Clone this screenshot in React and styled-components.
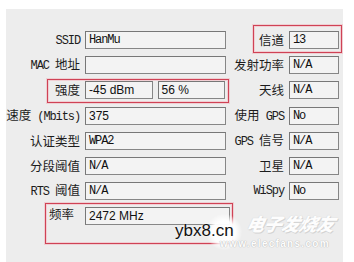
import styled, { createGlobalStyle, css } from "styled-components";

const GlobalStyle = createGlobalStyle`
  html, body {
    margin: 0;
    background: #ffffff;
  }
  body {
    width: 354px;
    height: 262px;
    overflow: hidden;
  }
`;

const Panel = styled.div`
  position: relative;
  margin: 9px 0 0 6px;
  width: 337px;
  height: 253px;
  padding-top: 22px;
  box-sizing: border-box;
  display: flex;
  background: #ededed;
  font-family: "Noto Sans CJK SC", sans-serif;
  color: #1c1c1c;
`;

const Column = styled.div`
  display: flex;
  flex-direction: column;
  gap: 7.2px;
  width: ${(p) => p.$w}px;
`;

const Row = styled.div`
  position: relative;
  display: flex;
  align-items: center;
  height: 18px;

  ${(p) =>
    p.$mark &&
    css`
      &::after {
        content: "";
        position: absolute;
        left: ${p.$mark[0]}px;
        right: ${p.$mark[1]}px;
        top: ${p.$mark[2]}px;
        bottom: ${p.$mark[3]}px;
        border: 1px solid #cf4255;
        box-shadow: 0 0 0 1px rgba(240, 170, 180, 0.45),
          inset 0 0 0 1px rgba(244, 180, 190, 0.55);
        pointer-events: none;
      }
    `}
`;

const Label = styled.div`
  flex-shrink: 0;
  width: ${(p) => p.$w}px;
  box-sizing: border-box;
  padding-right: 5px;
  text-align: right;
  font-size: 12.5px;
  line-height: 18px;
  white-space: pre;

  ${(p) =>
    p.$start &&
    css`
      align-self: flex-start;
      text-align: left;
      padding: 0 0 0 43px;
      line-height: 13px;
    `}

  ${(p) =>
    p.$up &&
    css`
      align-self: flex-start;
      line-height: 14px;
    `}
`;

const Lat = styled.span`
  font-family: "Liberation Mono", monospace;
  font-size: 12px;
  letter-spacing: -1.1px;
`;

const Pair = styled.div`
  display: flex;
  gap: 5px;
  width: 140px;
`;

const Field = styled.div`
  box-sizing: border-box;
  height: 18px;
  width: ${(p) => (p.$w ? `${p.$w}px` : "auto")};
  flex: ${(p) => (p.$w ? "0 0 auto" : "1")};
  padding: 0 3px;
  border: 1px solid #868686;
  border-top-color: #777;
  border-left-color: #777;
  background: #f3f3f3;
  font-family: ${(p) =>
    p.$sans ? '"Liberation Sans", sans-serif' : '"Liberation Mono", monospace'};
  font-size: 12px;
  letter-spacing: ${(p) => (p.$sans ? "0" : "-1.1px")};
  line-height: 16px;
  color: #111;
  white-space: nowrap;
  overflow: hidden;
`;

const Glow = styled.div`
  position: absolute;
  left: 200px;
  top: 205px;
  width: 36px;
  height: 36px;
  border-radius: 50%;
  background: radial-gradient(circle, rgba(255, 255, 255, 0.97) 45%, rgba(255, 255, 255, 0) 72%);
`;

const SiteMark = styled.div`
  position: absolute;
  left: 169px;
  top: 213px;
  font-family: "Liberation Sans", sans-serif;
  font-size: 17px;
  line-height: 17px;
  color: #111;
  text-shadow: 0 0 2px #fff;
`;

const LogoCn = styled.div`
  position: absolute;
  left: 241px;
  top: 203px;
  font-family: "Noto Sans CJK SC", sans-serif;
  font-size: 18px;
  font-weight: 900;
  font-style: italic;
  line-height: 22px;
  letter-spacing: -0.5px;
  color: #fdfdfd;
  text-shadow: 0 0 1px #c8c8c8, 1px 1px 0 #d4d4d4;
  transform: skewX(-12deg);
`;

const LogoUrl = styled.div`
  position: absolute;
  left: 214px;
  top: 230px;
  font-family: "Liberation Sans", sans-serif;
  font-size: 10px;
  font-weight: bold;
  line-height: 10px;
  letter-spacing: 1.3px;
  color: #fdfdfd;
  text-shadow: 0 0 1px #b8b8b8, 0 0 1px #b8b8b8;
`;

const App = () => {
  return (
    <>
      <GlobalStyle />
      <Panel>
        <Column $w={220}>
          <Row>
            <Label $w={79}>
              <Lat>SSID</Lat>
            </Label>
            <Field $w={141}>HanMu</Field>
          </Row>
          <Row>
            <Label $w={79}>
              <Lat>{"MAC "}</Lat>地址
            </Label>
            <Field $w={141} />
          </Row>
          <Row $mark={[41, -3, -2, -4]}>
            <Label $w={79}>强度</Label>
            <Pair>
              <Field $sans>-45 dBm</Field>
              <Field $sans>56 %</Field>
            </Pair>
          </Row>
          <Row>
            <Label $w={79}>
              速度<Lat>{" (Mbits)"}</Lat>
            </Label>
            <Field $w={141} $sans>
              375
            </Field>
          </Row>
          <Row>
            <Label $w={79}>认证类型</Label>
            <Field $w={141}>WPA2</Field>
          </Row>
          <Row>
            <Label $w={79}>分段阈值</Label>
            <Field $w={141}>N/A</Field>
          </Row>
          <Row>
            <Label $w={79}>
              <Lat>{"RTS "}</Lat>阈值
            </Label>
            <Field $w={141}>N/A</Field>
          </Row>
          <Row $mark={[39, -7, -4, -19]}>
            <Label $w={79} $start>
              频率
            </Label>
            <Field $w={145} $sans>
              2472 MHz
            </Field>
          </Row>
        </Column>
        <Column $w={113}>
          <Row $mark={[27, -3, -6, -4]}>
            <Label $w={63}>信道</Label>
            <Field $w={50}>13</Field>
          </Row>
          <Row>
            <Label $w={63}>发射功率</Label>
            <Field $w={50}>N/A</Field>
          </Row>
          <Row>
            <Label $w={63}>天线</Label>
            <Field $w={50}>N/A</Field>
          </Row>
          <Row>
            <Label $w={63}>
              使用<Lat>{" GPS"}</Lat>
            </Label>
            <Field $w={50}>No</Field>
          </Row>
          <Row>
            <Label $w={63}>
              <Lat>{"GPS "}</Lat>信号
            </Label>
            <Field $w={50}>N/A</Field>
          </Row>
          <Row>
            <Label $w={63}>卫星</Label>
            <Field $w={50}>N/A</Field>
          </Row>
          <Row>
            <Label $w={63} $up>
              <Lat>WiSpy</Lat>
            </Label>
            <Field $w={50}>No</Field>
          </Row>
        </Column>
        <Glow />
        <SiteMark>ybx8.cn</SiteMark>
        <LogoCn>电子发烧友</LogoCn>
        <LogoUrl>www.elecfans.com</LogoUrl>
      </Panel>
    </>
  );
};

export default App;
